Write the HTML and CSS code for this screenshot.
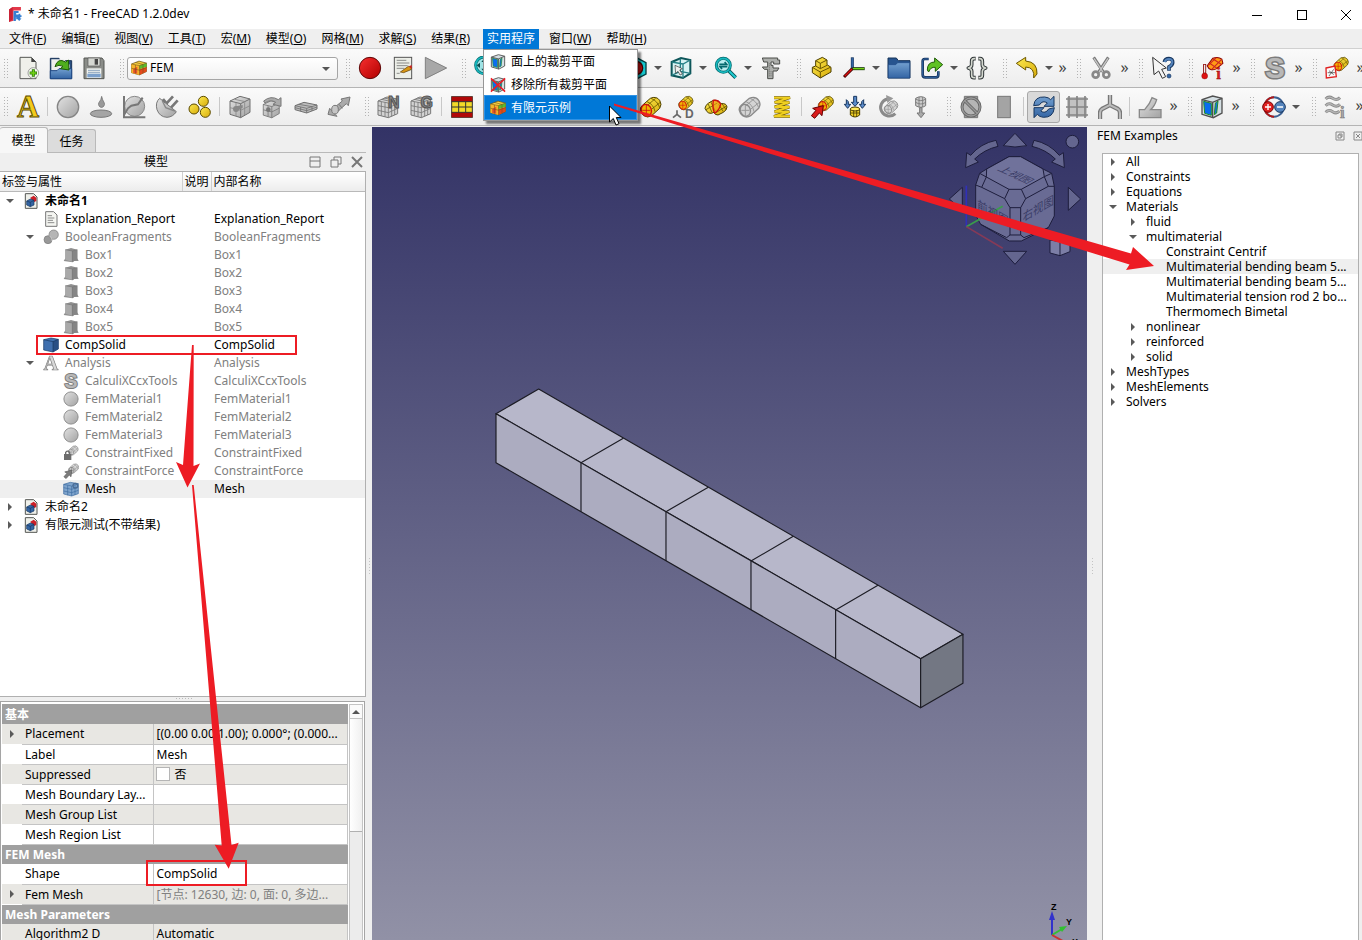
FILE: index.html
```html
<!DOCTYPE html>
<html lang="zh-CN">
<head>
<meta charset="utf-8">
<title>* 未命名1 - FreeCAD 1.2.0dev</title>
<link rel="stylesheet" href="styles.css">
</head>
<body>
<svg class="sprite" aria-hidden="true">
  <defs>
    <linearGradient id="gg" x1="0" y1="0" x2="1" y2="1"><stop offset="0" stop-color="#e2e2e2"/><stop offset="1" stop-color="#a2a2a2"/></linearGradient>
    <linearGradient id="gb" x1="0" y1="0" x2="0" y2="1"><stop offset="0" stop-color="#729fcf"/><stop offset="1" stop-color="#3465a4"/></linearGradient>
    <linearGradient id="gy" x1="0" y1="0" x2="1" y2="1"><stop offset="0" stop-color="#fce94f"/><stop offset="1" stop-color="#d8ac0a"/></linearGradient>
    <linearGradient id="gr" x1="0" y1="0" x2="1" y2="1"><stop offset="0" stop-color="#f83030"/><stop offset="1" stop-color="#b00000"/></linearGradient>
    <g id="cyl">
      <path d="M4 44 Q2 36 10 29 L34 8 Q52 0 62 14 Q70 26 62 38 L38 60 Q26 68 14 60 Q6 54 4 44Z" fill="url(#gy)" stroke="#4b3e00" stroke-width="3"/>
      <path d="M24 18Q44 26 48 48M36 8Q56 16 62 36M24 30L50 8M36 42L64 20" fill="none" stroke="#6a5800" stroke-width="2.5"/>
      <ellipse cx="22" cy="44" rx="15" ry="18" transform="rotate(-20 22 44)" fill="#f0b400" stroke="#d01010" stroke-width="4"/>
      <path d="M10 44H34M22 28V60" stroke="#d01010" stroke-width="2.5"/>
    </g>
    <g id="graycyl">
      <path d="M4 44 Q2 36 10 29 L34 8 Q52 0 62 14 Q70 26 62 38 L38 60 Q26 68 14 60 Q6 54 4 44Z" fill="#d4d4d4" stroke="#8a8a8a" stroke-width="4"/>
      <path d="M24 18Q44 26 48 48M36 8Q56 16 62 36M24 30L50 8M36 42L64 20M10 44H34M22 28V60" fill="none" stroke="#999" stroke-width="3"/>
      <ellipse cx="22" cy="44" rx="15" ry="18" transform="rotate(-20 22 44)" fill="none" stroke="#8a8a8a" stroke-width="4"/>
    </g>
    <g id="cube">
      <path d="M6 18L36 4L66 12V52L38 68L6 58Z" fill="url(#gg)" stroke="#707070" stroke-width="3"/>
      <path d="M6 18L38 26L66 12M38 26V68" fill="none" stroke="#707070" stroke-width="3"/>
    </g>
    <g id="grid3">
      <path d="M3 18L30 6L62 12V56L34 68L3 60Z" fill="#d2d2d2" stroke="#777" stroke-width="3"/>
      <path d="M3 18L34 24L62 12M34 24V68M13 20V62M24 22V65M3 32L34 38L62 26M3 46L34 53L62 40M44 20V64M53 16V60M14 13L44 20M22 9L53 16" fill="none" stroke="#777" stroke-width="2.5"/>
    </g>
    <g id="clipcube">
      <path d="M6 14L38 3L66 10V54L40 68L6 58Z" fill="#d5dfe3" stroke="#505050" stroke-width="4"/>
      <path d="M11 19L34 25V61L14 55Z" fill="#0a6cf0" stroke="#1d8d28" stroke-width="3"/>
      <path d="M46 24L54 18L50 54L43 59Z" fill="#1670e8" stroke="#1d8d28" stroke-width="3"/>
      <path d="M6 14L38 22L66 10M38 22V68" fill="none" stroke="#505050" stroke-width="4"/>
    </g>
  </defs>
  <symbol id="logo" viewBox="0 0 48 54"><path d="M4 12L16 3H44V15H19V50L4 54Z" fill="#e2384a"/><path d="M4 12L16 3V45L4 54Z" fill="#c82135"/><path d="M19 17H36V24H28V29H36V26H42V31H46V37H42V42H46L38 51L33 45H28V38H27V51H19Z" fill="#3580d3"/></symbol>
  <symbol id="new" viewBox="0 0 72 72"><path d="M12 4H46L60 18V68H12Z" fill="#eff0ea" stroke="#555753" stroke-width="3"/><path d="M46 4V18H60Z" fill="#444"/><circle cx="52" cy="51" r="16" fill="#f4f8ee" stroke="#777" stroke-width="2"/><path d="M52 40V62M41 51H63" stroke="#2d7c0b" stroke-width="9"/><path d="M52 42V60M43 51H61" stroke="#73d216" stroke-width="4"/></symbol>
  <symbol id="open" viewBox="0 0 72 72"><path d="M4 7H30L34 14H68V68H4Z" fill="#294f80" stroke="#1a3459" stroke-width="3"/><path d="M7 10H44L62 26V44H7Z" fill="#eee"/><path d="M4 44H24L30 38H68V68H4Z" fill="url(#gb)" stroke="#204a87" stroke-width="3"/><path d="M18 32Q26 4 50 18L58 12L60 42L34 38L42 31Q30 24 18 32Z" fill="#4fae1d" stroke="#1d5a05" stroke-width="3"/></symbol>
  <symbol id="save" viewBox="0 0 72 72"><path d="M8 6H60L66 14V68H6V6Z" fill="#8a8c88" stroke="#555753" stroke-width="3"/><path d="M18 6H54V30H18Z" fill="#d5d7d2" stroke="#555" stroke-width="2"/><rect x="38" y="9" width="10" height="17" fill="#444"/><rect x="14" y="37" width="44" height="29" fill="#f0f2ef"/><path d="M18 43H54M18 49H54" stroke="#5b7ba5" stroke-width="2"/><path d="M16 53H56V64H16Z" fill="#7ba0cc"/></symbol>
  <symbol id="fem" viewBox="0 0 72 72"><path d="M2 18L36 5L70 14V52L38 67L2 57Z" fill="#f8d040" stroke="#5a4512" stroke-width="3"/><path d="M2 18L38 25V67L2 57Z" fill="#f6b62a"/><path d="M38 25L70 14V30L38 42Z" fill="#58bd2e"/><path d="M38 42L70 32V52L38 67Z" fill="#e4481c"/><path d="M10 40L28 30V62L10 58Z" fill="#e8502a"/><path d="M20 11L54 20V59M2 37L38 46L70 34M20 22V62M38 25V67M2 18L38 25L70 14" fill="none" stroke="#74531a" stroke-width="2.5"/></symbol>
  <symbol id="record" viewBox="0 0 72 72"><circle cx="36" cy="36" r="32" fill="url(#gr)" stroke="#5c0707" stroke-width="3"/></symbol>
  <symbol id="macro" viewBox="0 0 72 72"><rect x="10" y="4" width="52" height="64" fill="#eceee8" stroke="#555" stroke-width="3"/><path d="M17 13H46M17 21H55M17 29H50M17 37H40M17 52H26" stroke="#777" stroke-width="2.5"/><path d="M28 48L52 31L62 34L60 41L38 50Z" fill="#d89614" stroke="#5a3b08" stroke-width="2"/><path d="M54 31L62 27V40Z" fill="#cc2020"/></symbol>
  <symbol id="play" viewBox="0 0 72 72"><path d="M4 4L68 36L4 68Z" fill="#a8a8a8" stroke="#808080" stroke-width="3"/></symbol>
  <symbol id="fit" viewBox="0 0 72 72"><circle cx="30" cy="28" r="25" fill="#9fe3e5" stroke="#06696e" stroke-width="9"/><circle cx="30" cy="28" r="25" fill="none" stroke="#17b8be" stroke-width="5"/><path d="M30 8L38 18H22ZM30 48L38 38H22ZM8 28L18 20V36ZM52 28L42 20V36Z" fill="#0a4c4e"/><path d="M48 46L66 64" stroke="#06898e" stroke-width="9"/></symbol>
  <symbol id="style" viewBox="0 0 72 72"><path d="M8 20L36 4L66 20V54L36 70L8 54Z" fill="#16c5cc" stroke="#033f42" stroke-width="4"/><circle cx="36" cy="36" r="20" fill="#cc1515" stroke="#400" stroke-width="4"/></symbol>
  <symbol id="wirebox" viewBox="0 0 72 72"><path d="M8 18L36 6L64 12V52L42 66L8 58Z" fill="#d7f2f3" stroke="#0d5559" stroke-width="6"/><path d="M8 18L42 24L64 12M42 24V66M34 8V46L8 58M34 46L64 52" fill="none" stroke="#258087" stroke-width="4"/><path d="M18 28L40 38L32 42L40 54L33 57L27 46L20 52Z" fill="#eee" stroke="#333" stroke-width="2"/></symbol>
  <symbol id="zoomsel" viewBox="0 0 72 72"><path d="M44 44L65 65" stroke="#05595c" stroke-width="11"/><path d="M44 44L65 65" stroke="#21cfd5" stroke-width="6"/><circle cx="28" cy="28" r="21" fill="#b9edef" stroke="#05696d" stroke-width="9"/><circle cx="28" cy="28" r="21" fill="none" stroke="#17b8be" stroke-width="5"/><path d="M16 25H38L32 18M40 32H18L24 39" fill="none" stroke="#05696d" stroke-width="5"/></symbol>
  <symbol id="caliper" viewBox="0 0 72 72"><path d="M10 6H56V12H62V24H44V18H36V28H42V36H60L54 45H42V68H26V40H16L10 33H26V18H14Z" fill="#aeb0ad" stroke="#4a4c49" stroke-width="3"/><path d="M31 22V64M36 46V64" stroke="#4a4c49" stroke-width="2" stroke-dasharray="3 3"/></symbol>
  <symbol id="part" viewBox="0 0 72 72"><path d="M10 34L20 30V14L40 4L54 12V26L66 34V48L34 66L10 50Z" fill="url(#gy)" stroke="#4b3e00" stroke-width="3"/><path d="M20 14L34 22L54 12M34 22V38L54 28M10 34L34 48L64 34M34 48V66M20 30L34 38" fill="none" stroke="#6b5600" stroke-width="3"/></symbol>
  <symbol id="axes" viewBox="0 0 72 72"><path d="M31 38V4" stroke="#17365f" stroke-width="9"/><path d="M31 38V6" stroke="#3465a4" stroke-width="5"/><path d="M31 38H68" stroke="#173b05" stroke-width="9"/><path d="M33 38H66" stroke="#73d216" stroke-width="4"/><path d="M31 38L6 63" stroke="#400" stroke-width="9"/><path d="M30 39L8 61" stroke="#d11" stroke-width="4"/></symbol>
  <symbol id="folder" viewBox="0 0 72 72"><path d="M3 6H28L34 14H69V66H3Z" fill="#27548f" stroke="#173459" stroke-width="3"/><path d="M4 26H26L32 20H68V66H4Z" fill="url(#gb)" stroke="#204a87" stroke-width="2"/></symbol>
  <symbol id="export" viewBox="0 0 72 72"><path d="M26 9H14Q8 9 8 16V56Q8 64 16 64H48Q55 64 55 56V46" fill="none" stroke="#17365f" stroke-width="8"/><path d="M26 9H14Q8 9 8 16V56Q8 64 16 64H48Q55 64 55 56V46" fill="none" stroke="#3465a4" stroke-width="3"/><path d="M22 42Q22 18 44 18V6L68 26L46 46V34Q32 32 26 48Z" fill="#5fc222" stroke="#1d5a05" stroke-width="3"/></symbol>
  <symbol id="braces" viewBox="0 0 72 72"><g fill="none" stroke-linejoin="round"><path d="M32 8H27Q20 8 20 16V26Q20 34 10 36Q20 38 20 46V58Q20 65 27 65H32M40 8H45Q52 8 52 16V26Q52 34 62 36Q52 38 52 46V58Q52 65 45 65H40" stroke="#2e3436" stroke-width="11"/><path d="M31 8H27Q20 8 20 16V26Q20 34 10 36Q20 38 20 46V58Q20 65 27 65H31M41 8H45Q52 8 52 16V26Q52 34 62 36Q52 38 52 46V58Q52 65 45 65H41" stroke="#d3d7cf" stroke-width="5"/></g></symbol>
  <symbol id="undo" viewBox="0 0 72 72"><path d="M4 22L32 4V15Q68 18 66 54L56 66Q60 34 32 33V42Z" fill="url(#gy)" stroke="#6b5600" stroke-width="3"/></symbol>
  <symbol id="cut" viewBox="0 0 72 72"><path d="M14 4L44 50M58 4L28 50" stroke="#777" stroke-width="9"/><path d="M15 7L43 50M57 7L29 50" stroke="#c6c6c6" stroke-width="4"/><circle cx="20" cy="56" r="9" fill="none" stroke="#888" stroke-width="8"/><circle cx="52" cy="56" r="9" fill="none" stroke="#888" stroke-width="8"/></symbol>
  <symbol id="what" viewBox="0 0 72 72"><path d="M40 18Q42 8 54 8Q66 8 65 20Q64 28 54 33V44" fill="none" stroke="#17365f" stroke-width="11"/><path d="M41 18Q43 9 54 9Q65 9 64 20Q63 28 54 33V43" fill="none" stroke="#5484bd" stroke-width="6"/><circle cx="54" cy="60" r="6" fill="#3465a4" stroke="#17365f" stroke-width="2"/><path d="M5 4L46 36L32 40L44 62L34 67L23 45L9 56Z" fill="#f4f4f4" stroke="#333" stroke-width="3"/></symbol>
  <symbol id="femcyl" viewBox="0 0 72 72"><use href="#cyl" transform="translate(3 2)"/></symbol>
  <symbol id="tie" viewBox="0 0 72 72"><use href="#graycyl" transform="translate(3 2)"/></symbol>
  <symbol id="heat" viewBox="0 0 72 72"><g transform="translate(14 -1) scale(.76)"><path d="M6 40L28 10Q50 2 64 14L68 30L42 52Q16 64 6 40Z" fill="#ff9b16" stroke="#8b0000" stroke-width="4"/><path d="M16 30L48 52M28 12L64 36M10 38L42 8M24 54L62 16" stroke="#c22" stroke-width="4"/></g><path d="M11 24V56" stroke="#8b0000" stroke-width="9"/><path d="M11 26V50" stroke="#eee" stroke-width="4"/><circle cx="11" cy="60" r="9" fill="#d11" stroke="#700"/><text x="46" y="70" font-family="Liberation Serif, serif" font-weight="700" font-size="50" fill="#d22" stroke="#700">i</text></symbol>
  <symbol id="solver" viewBox="0 0 72 72"><text x="36" y="67" text-anchor="middle" font-family="Liberation Sans, sans-serif" font-weight="700" font-size="88" fill="#b8b8b8" stroke="#7c7c7c" stroke-width="9" paint-order="stroke">S</text></symbol>
  <symbol id="region" viewBox="0 0 72 72"><g transform="translate(24 0) scale(.7)"><use href="#cyl"/></g><path d="M3 36L30 30L34 62L4 66Z" fill="#fff" fill-opacity=".7" stroke="#e02020" stroke-width="4"/><path d="M12 44L26 56M26 40L12 60M8 50H30" stroke="#333" stroke-width="2"/></symbol>
  <symbol id="ana" viewBox="0 0 72 72"><text x="36" y="67" text-anchor="middle" font-family="Liberation Serif, serif" font-weight="700" font-size="92" fill="#f2cb1c" stroke="#5a4a00" stroke-width="3">A</text></symbol>
  <symbol id="sphere" viewBox="0 0 72 72"><circle cx="36" cy="36" r="32" fill="url(#gg)" stroke="#858585" stroke-width="4"/></symbol>
  <symbol id="fluid" viewBox="0 0 72 72"><ellipse cx="36" cy="56" rx="32" ry="11" fill="#a5a5a5" stroke="#777" stroke-width="3"/><path d="M38 4Q40 14 46 24A9 10 0 1 1 29 24Q37 14 38 4Z" fill="#999" stroke="#666" stroke-width="2"/></symbol>
  <symbol id="nonlin" viewBox="0 0 72 72"><circle cx="38" cy="34" r="30" fill="url(#gg)" stroke="#888" stroke-width="3"/><path d="M6 3V67H70M6 60L18 40L28 32L48 28L62 8" fill="none" stroke="#777" stroke-width="6"/></symbol>
  <symbol id="reinf" viewBox="0 0 72 72"><path d="M14 10Q0 22 6 44Q14 66 36 67Q54 66 64 50L14 10Z" fill="url(#gg)" stroke="#777" stroke-width="3"/><path d="M34 26L54 4M48 38L68 16M24 12L32 22" stroke="#777" stroke-width="8"/><path d="M22 18L32 38L60 48" stroke="#888" stroke-width="4" fill="none"/></symbol>
  <symbol id="spheres" viewBox="0 0 72 72"><g fill="url(#gy)" stroke="#5a4a00" stroke-width="3"><circle cx="46" cy="19" r="15"/><circle cx="18" cy="42" r="15"/><circle cx="52" cy="52" r="15"/></g></symbol>
  <symbol id="beam" viewBox="0 0 72 72"><use href="#cube"/><path d="M20 13L52 20M50 22V60M6 38L38 46L66 32M24 23V63" stroke="#888" stroke-width="2.5" fill="none"/><circle cx="24" cy="42" r="9" fill="#888"/><path d="M24 34L44 30V38L26 48Z" fill="#888"/></symbol>
  <symbol id="rotbeam" viewBox="0 0 72 72"><g transform="translate(2 14) scale(.8)"><use href="#cube"/><path d="M6 38L38 46L66 32M24 23V63" stroke="#777" stroke-width="3" fill="none"/></g><path d="M8 18Q30 0 52 14L60 8V34L36 28L44 22Q28 12 12 24Z" fill="#aaa" stroke="#777" stroke-width="3"/><circle cx="22" cy="44" r="7" fill="#777"/></symbol>
  <symbol id="slab" viewBox="0 0 72 72"><path d="M3 32L30 22L69 30V42L38 54L3 44Z" fill="#bcbcbc" stroke="#707070" stroke-width="3"/><path d="M3 32L38 40L69 30M38 40V54M20 36V48M54 36V48M14 28L54 35M3 38L38 47L69 36" fill="none" stroke="#707070" stroke-width="2.5"/></symbol>
  <symbol id="tube" viewBox="0 0 72 72"><path d="M3 58L8 40L14 46L24 36L46 18L42 12L69 6L64 32L58 26L36 46L24 58L30 64Z" fill="#aaa" stroke="#777" stroke-width="3"/><ellipse cx="24" cy="44" rx="10" ry="13" fill="#c5c5c5" stroke="#777" stroke-width="3"/><path d="M36 28L46 40" stroke="#777" stroke-width="3"/></symbol>
  <symbol id="meshn" viewBox="0 0 72 72"><use href="#grid3"/><text x="50" y="38" text-anchor="middle" font-family="Liberation Sans, sans-serif" font-weight="700" font-size="48" fill="#888" stroke="#555" stroke-width="3">N</text></symbol>
  <symbol id="meshg" viewBox="0 0 72 72"><use href="#grid3"/><text x="50" y="38" text-anchor="middle" font-family="Liberation Sans, sans-serif" font-weight="700" font-size="48" fill="#888" stroke="#555" stroke-width="3">G</text></symbol>
  <symbol id="layers" viewBox="0 0 72 72"><rect x="5" y="5" width="62" height="62" fill="#f3d928" stroke="#333" stroke-width="3"/><path d="M5 5H67V20H5ZM5 52H67V67H5Z" fill="#b00808"/><path d="M5 20H67M5 36H67M5 52H67M26 20V52M47 20V52" stroke="#333" stroke-width="3"/></symbol>
  <symbol id="cyld" viewBox="0 0 72 72"><g transform="translate(20 0) scale(.7)"><use href="#cyl"/></g><path d="M18 46V58L6 68M18 58L30 68" fill="none" stroke="#666" stroke-width="5"/><text x="42" y="70" font-family="Liberation Sans, sans-serif" font-weight="700" font-size="36" fill="#666">D</text></symbol>
  <symbol id="contact" viewBox="0 0 72 72"><path d="M3 40Q4 30 14 24L28 16Q44 14 50 26Q68 24 69 36Q68 46 58 52L42 60Q32 60 30 52Q12 62 3 40Z" fill="url(#gy)" stroke="#4b3e00" stroke-width="3"/><path d="M12 26L24 52M20 20L34 48M6 44L40 24M34 54L66 34M44 28L58 50M54 26L66 44" stroke="#6a5800" stroke-width="2.5"/><path d="M28 16Q44 14 50 28Q46 46 32 54Q24 40 28 16Z" fill="#f09a10" fill-opacity=".6" stroke="#d01010" stroke-width="4"/></symbol>
  <symbol id="spring" viewBox="0 0 72 72"><path d="M12 8H60L14 22H58L14 36H58L14 50H58L12 64H60" fill="none" stroke="#6b5600" stroke-width="9"/><path d="M12 8H60L14 22H58L14 36H58L14 50H58L12 64H60" fill="none" stroke="#f0d020" stroke-width="6"/></symbol>
  <symbol id="force" viewBox="0 0 72 72"><g transform="translate(22 0) scale(.74)"><use href="#cyl"/></g><path d="M4 62L18 46L8 40L40 32L36 62L28 54L14 70Z" fill="#d91c1c" stroke="#600" stroke-width="3"/></symbol>
  <symbol id="press" viewBox="0 0 72 72"><path d="M22 42H50V60Q36 72 22 60Z" fill="#f0cf26" stroke="#4b3e00" stroke-width="3"/><ellipse cx="36" cy="42" rx="14" ry="6" fill="#ffe95b" stroke="#4b3e00" stroke-width="3"/><path d="M32 46V66M41 46V66M22 54H50" stroke="#4b3e00" stroke-width="2.5"/><path d="M32 4H41V22H47L36 34L25 22H32ZM10 14L16 20V28H23L14 40L4 28H10ZM62 14L56 20V28H49L58 40L68 28H62Z" fill="#5b8ccb" stroke="#17365f" stroke-width="3"/></symbol>
  <symbol id="centrif" viewBox="0 0 72 72"><path d="M34 12A26 26 0 1 0 58 56" fill="none" stroke="#8a8a8a" stroke-width="9"/><path d="M30 0L52 10L34 24Z" fill="#999"/><g transform="translate(22 14) scale(.66)"><use href="#graycyl"/></g></symbol>
  <symbol id="weight" viewBox="0 0 72 72"><path d="M20 10Q36 0 50 10V32Q36 42 20 32Z" fill="#ccc" stroke="#777" stroke-width="3"/><path d="M20 12Q36 22 50 12M20 22Q36 32 50 22M30 6V36M41 6V36" fill="none" stroke="#777" stroke-width="2.5"/><path d="M32 38H39V54H47L36 68L24 54H32Z" fill="#aaa" stroke="#777" stroke-width="3"/></symbol>
  <symbol id="block" viewBox="0 0 72 72"><path d="M16 4H56V68H16Z" fill="#999" stroke="#777" stroke-width="3"/><circle cx="36" cy="36" r="27" fill="#b5b5b5" stroke="#666" stroke-width="9"/><path d="M17 17L55 55" stroke="#666" stroke-width="9"/><circle cx="36" cy="36" r="27" fill="none" stroke="#999" stroke-width="4"/><path d="M17 17L55 55" stroke="#999" stroke-width="4"/></symbol>
  <symbol id="plate" viewBox="0 0 72 72"><rect x="17" y="4" width="38" height="64" fill="#a4a4a4" stroke="#777" stroke-width="3"/></symbol>
  <symbol id="refresh" viewBox="0 0 72 72"><path d="M5 32Q8 4 38 6Q50 7 56 14L66 4V34H36L46 24Q32 14 22 30ZM67 38Q64 68 34 67Q22 66 16 58L6 68V38H36L26 48Q40 58 50 42Z" fill="url(#gb)" stroke="#17365f" stroke-width="3"/></symbol>
  <symbol id="mesh2d" viewBox="0 0 72 72"><rect x="6" y="6" width="60" height="60" fill="#c2c2c2"/><path d="M3 12H69M3 36H69M3 60H69M12 3V69M36 3V69M60 3V69" stroke="#858585" stroke-width="5"/></symbol>
  <symbol id="pipe" viewBox="0 0 72 72"><path d="M36 0V30L12 42Q6 46 6 54V72M36 30L60 42Q66 46 66 54V72" fill="none" stroke="#777" stroke-width="13"/><path d="M36 0V30L12 42Q6 46 6 54V72M36 30L60 42Q66 46 66 54V72" fill="none" stroke="#bbb" stroke-width="6"/></symbol>
  <symbol id="elbow" viewBox="0 0 72 72"><path d="M4 44H20Q36 26 42 8L56 14Q50 34 38 44H69V68H4Z" fill="url(#gg)" stroke="#888" stroke-width="4"/></symbol>
  <symbol id="clip" viewBox="0 0 72 72"><use href="#clipcube"/></symbol>
  <symbol id="clipx" viewBox="0 0 72 72"><use href="#clipcube"/><path d="M4 6L68 66M68 6L4 66" stroke="#ee1c25" stroke-width="7"/></symbol>
  <symbol id="charge" viewBox="0 0 72 72"><circle cx="36" cy="36" r="29" fill="none" stroke="#3a5f92" stroke-width="6"/><path d="M36 7A29 29 0 0 0 36 65" fill="none" stroke="#b01818" stroke-width="6"/><circle cx="18" cy="36" r="16" fill="#e02020" stroke="#700" stroke-width="3"/><circle cx="54" cy="36" r="16" fill="#5484bd" stroke="#17365f" stroke-width="3"/><path d="M9 36H27M18 27V45M45 36H63" stroke="#fff" stroke-width="4"/></symbol>
  <symbol id="waves" viewBox="0 0 72 72"><path d="M5 12Q14 2 26 10T48 8M5 32Q14 22 26 30T48 28M5 52Q14 42 26 50T46 48" fill="none" stroke="#888" stroke-width="9"/><path d="M5 12Q14 2 26 10T48 8M5 32Q14 22 26 30T48 28M5 52Q14 42 26 50T46 48" fill="none" stroke="#b5b5b5" stroke-width="4"/><text x="48" y="70" font-family="Liberation Serif, serif" font-weight="700" font-size="50" fill="#aaa" stroke="#777" stroke-width="2">i</text></symbol>
  <symbol id="file" viewBox="0 0 48 48"><path d="M7 2H32L42 12V46H7Z" fill="#eff0ea" stroke="#555753" stroke-width="3"/><path d="M22 14L32 8L40 14V24L32 28Z" fill="#cc1f28"/><path d="M11 24L22 18L33 22V36L22 41L11 36Z" fill="#3465a4" stroke="#17365f" stroke-width="2"/><path d="M11 24L22 28L33 22M22 28V41" fill="none" stroke="#17365f" stroke-width="2"/></symbol>
  <symbol id="doc" viewBox="0 0 48 48"><path d="M8 2H32L42 12V46H8Z" fill="#f4f5f1" stroke="#777" stroke-width="3"/><path d="M14 14H27M14 21H34M14 28H30M14 35H34" stroke="#777" stroke-width="2.5"/></symbol>
  <symbol id="bool" viewBox="0 0 48 48"><circle cx="15" cy="32" r="12" fill="#999" stroke="#777" stroke-width="2"/><circle cx="32" cy="17" r="14" fill="#b5b5b5" stroke="#777" stroke-width="2"/><path d="M19 21A14 14 0 0 1 27 36" stroke="#ddd" stroke-width="2" fill="none"/></symbol>
  <symbol id="box" viewBox="0 0 48 48"><path d="M7 8L24 3L43 8V34L47 42H34L29 46L2 42L7 34Z" fill="#8f8f8f"/><path d="M7 8L28 12V44L7 38Z" fill="#a9a9a9"/><path d="M28 12L43 8V38L28 44Z" fill="#858585"/><path d="M7 8L28 12L43 8M28 12V44" stroke="#757575" fill="none" stroke-width="2"/></symbol>
  <symbol id="solid" viewBox="0 0 48 48"><path d="M2 8L24 3L46 7V36L30 45L2 39Z" fill="#3f6fae" stroke="#17365f" stroke-width="2"/><path d="M30 14L46 7V36L30 45Z" fill="#284f85"/><path d="M2 8L30 14L46 7M30 14V45" fill="none" stroke="#17365f" stroke-width="2"/></symbol>
  <symbol id="lock" viewBox="0 0 48 48"><g transform="translate(14 0) scale(.48)"><use href="#graycyl"/></g><rect x="3" y="27" width="22" height="18" fill="#6d6d6d"/><path d="M8 28V22Q14 15 20 22V28" fill="none" stroke="#6d6d6d" stroke-width="4"/></symbol>
  <symbol id="bluemesh" viewBox="0 0 48 48"><path d="M2 10L22 4L46 8V38L26 45L2 39Z" fill="#7fa4cc" stroke="#3e6ca2" stroke-width="2"/><path d="M2 10L26 15L46 8M26 15V45M14 13V43M2 20L26 25L46 18M2 30L26 35L46 28M36 12V42" fill="none" stroke="#3e6ca2" stroke-width="2"/><circle cx="37" cy="14" r="7" fill="none" stroke="#4b6d96" stroke-width="4"/></symbol>
</svg>

<div class="app">
  <header class="titlebar">
    <svg class="titlebar__logo"><use href="#logo"/></svg>
    <h1 class="titlebar__text">* 未命名1 - FreeCAD 1.2.0dev</h1>
    <button class="winbtn" aria-label="最小化"><svg viewBox="0 0 12 12"><path d="M1 6.500H11"/></svg></button>
    <button class="winbtn" aria-label="最大化"><svg viewBox="0 0 12 12"><rect x="1.500" y="1.500" width="9" height="9"/></svg></button>
    <button class="winbtn" aria-label="关闭"><svg viewBox="0 0 12 12"><path d="M1 1L11 11M11 1L1 11"/></svg></button>
  </header>

  <nav class="menubar">
    <button class="menubar__item">文件(<u>F</u>)</button>
    <button class="menubar__item">编辑(<u>E</u>)</button>
    <button class="menubar__item">视图(<u>V</u>)</button>
    <button class="menubar__item">工具(<u>T</u>)</button>
    <button class="menubar__item">宏(<u>M</u>)</button>
    <button class="menubar__item">模型(<u>O</u>)</button>
    <button class="menubar__item">网格(<u>M</u>)</button>
    <button class="menubar__item">求解(<u>S</u>)</button>
    <button class="menubar__item">结果(<u>R</u>)</button>
    <div class="menubar__open">
      <button class="menubar__item menubar__item--active" aria-expanded="true">实用程序</button>
      <div class="menu" role="menu">
        <button class="menu__item" role="menuitem"><svg><use href="#clip"/></svg>面上的裁剪平面</button>
        <button class="menu__item" role="menuitem"><svg><use href="#clipx"/></svg>移除所有裁剪平面</button>
        <button class="menu__item menu__item--active" role="menuitem"><svg><use href="#fem"/></svg>有限元示例</button>
      </div>
    </div>
    <button class="menubar__item">窗口(<u>W</u>)</button>
    <button class="menubar__item">帮助(<u>H</u>)</button>
  </nav>

  <div class="toolbar toolbar--top" role="toolbar" aria-label="标准">
    <span class="grip grip--first"></span>
    <button class="tool" aria-label="新建"><svg><use href="#new"/></svg></button>
    <button class="tool" aria-label="打开"><svg><use href="#open"/></svg></button>
    <button class="tool" aria-label="保存"><svg><use href="#save"/></svg></button>
    <span class="grip"></span>
    <label class="workbench" aria-label="工作台"><svg class="workbench__icon"><use href="#fem"/></svg><select class="workbench__select"><option>FEM</option></select></label>
    <span class="grip"></span>
    <button class="tool" aria-label="录制宏"><svg><use href="#record"/></svg></button>
    <button class="tool" aria-label="宏"><svg><use href="#macro"/></svg></button>
    <button class="tool" aria-label="执行宏"><svg><use href="#play"/></svg></button>
    <span class="grip"></span>
    <button class="tool" aria-label="适合全部"><svg><use href="#fit"/></svg></button>
    <span class="covered"></span>
    <button class="tool" aria-label="绘图样式"><svg><use href="#style"/></svg></button><button class="drop" aria-label="更多样式"></button>
    <button class="tool" aria-label="框选"><svg><use href="#wirebox"/></svg></button><button class="drop" aria-label="更多选择"></button>
    <button class="tool" aria-label="缩放"><svg><use href="#zoomsel"/></svg></button><button class="drop" aria-label="更多缩放"></button>
    <button class="tool" aria-label="测量"><svg><use href="#caliper"/></svg></button>
    <span class="grip"></span>
    <button class="tool" aria-label="零件"><svg><use href="#part"/></svg></button>
    <button class="tool" aria-label="坐标系"><svg><use href="#axes"/></svg></button><button class="drop" aria-label="更多坐标"></button>
    <button class="tool" aria-label="组"><svg><use href="#folder"/></svg></button>
    <button class="tool" aria-label="链接"><svg><use href="#export"/></svg></button><button class="drop" aria-label="更多链接"></button>
    <button class="tool" aria-label="表达式"><svg><use href="#braces"/></svg></button>
    <span class="grip"></span>
    <button class="tool" aria-label="撤销"><svg><use href="#undo"/></svg></button><button class="drop" aria-label="撤销列表"></button>
    <button class="more">»</button>
    <span class="grip"></span>
    <button class="tool" aria-label="剪切"><svg><use href="#cut"/></svg></button><button class="more">»</button>
    <span class="grip"></span>
    <button class="tool" aria-label="这是什么"><svg><use href="#what"/></svg></button>
    <span class="grip"></span>
    <button class="tool" aria-label="热"><svg><use href="#heat"/></svg></button><button class="more">»</button>
    <span class="grip"></span>
    <button class="tool" aria-label="求解器"><svg><use href="#solver"/></svg></button><button class="more">»</button>
    <span class="grip"></span>
    <button class="tool" aria-label="区域"><svg><use href="#region"/></svg></button><button class="more">»</button>
  </div>

  <div class="toolbar" role="toolbar" aria-label="有限元">
    <span class="grip grip--first"></span>
    <button class="tool" aria-label="分析"><svg><use href="#ana"/></svg></button>
    <span class="sep"></span>
    <button class="tool" aria-label="固体材料"><svg><use href="#sphere"/></svg></button>
    <button class="tool" aria-label="流体材料"><svg><use href="#fluid"/></svg></button>
    <button class="tool" aria-label="非线性材料"><svg><use href="#nonlin"/></svg></button>
    <button class="tool" aria-label="钢筋材料"><svg><use href="#reinf"/></svg></button>
    <button class="tool" aria-label="材料编辑"><svg><use href="#spheres"/></svg></button>
    <span class="sep"></span>
    <button class="tool" aria-label="梁截面"><svg><use href="#beam"/></svg></button>
    <button class="tool" aria-label="梁旋转"><svg><use href="#rotbeam"/></svg></button>
    <button class="tool" aria-label="壳厚度"><svg><use href="#slab"/></svg></button>
    <button class="tool" aria-label="流体截面"><svg><use href="#tube"/></svg></button>
    <span class="grip"></span>
    <button class="tool" aria-label="Netgen 网格"><svg><use href="#meshn"/></svg></button>
    <button class="tool" aria-label="Gmsh 网格"><svg><use href="#meshg"/></svg></button>
    <span class="sep"></span>
    <button class="tool" aria-label="网格层"><svg><use href="#layers"/></svg></button>
    <span class="covered covered--long"></span>
    <button class="tool" aria-label="位移约束"><svg><use href="#femcyl"/></svg></button>
    <button class="tool" aria-label="刚体约束"><svg><use href="#cyld"/></svg></button>
    <button class="tool" aria-label="接触约束"><svg><use href="#contact"/></svg></button>
    <button class="tool" aria-label="绑定约束"><svg><use href="#tie"/></svg></button>
    <button class="tool" aria-label="弹簧"><svg><use href="#spring"/></svg></button>
    <span class="sep"></span>
    <button class="tool" aria-label="力"><svg><use href="#force"/></svg></button>
    <button class="tool" aria-label="压力"><svg><use href="#press"/></svg></button>
    <button class="tool" aria-label="离心力"><svg><use href="#centrif"/></svg></button>
    <button class="tool" aria-label="重力"><svg><use href="#weight"/></svg></button>
    <span class="grip"></span>
    <button class="tool" aria-label="清除结果"><svg><use href="#block"/></svg></button>
    <button class="tool" aria-label="显示结果"><svg><use href="#plate"/></svg></button>
    <span class="sep"></span>
    <button class="tool tool--checked" aria-label="刷新"><svg><use href="#refresh"/></svg></button>
    <button class="tool" aria-label="管线"><svg><use href="#mesh2d"/></svg></button>
    <button class="tool" aria-label="分支"><svg><use href="#pipe"/></svg></button>
    <span class="sep"></span>
    <button class="tool" aria-label="变形"><svg><use href="#elbow"/></svg></button><button class="more">»</button>
    <span class="grip"></span>
    <button class="tool" aria-label="裁剪平面"><svg><use href="#clip"/></svg></button><button class="more">»</button>
    <span class="grip"></span>
    <button class="tool" aria-label="电磁"><svg><use href="#charge"/></svg></button><button class="drop" aria-label="更多电磁"></button>
    <span class="grip"></span>
    <button class="tool" aria-label="流体"><svg><use href="#waves"/></svg></button><button class="more">»</button>
  </div>

  <main class="work">
    <section class="side">
      <div class="tabs"><button class="tab tab--active">模型</button><button class="tab">任务</button></div>
      <div class="dockhead">
        <h2 class="dockhead__title">模型</h2>
        <button class="dockbtn" aria-label="折叠"><svg viewBox="0 0 12 12"><path d="M1 1H11V11H1ZM1 5H11"/></svg></button>
        <button class="dockbtn" aria-label="浮动"><svg viewBox="0 0 12 12"><path d="M1 4H8V11H1ZM4 4V1H11V8H8"/></svg></button>
        <button class="dockbtn" aria-label="关闭"><svg viewBox="0 0 12 12"><path class="thick" d="M1 1L11 11M11 1L1 11"/></svg></button>
      </div>
      <div class="treebox">
        <table class="tree">
          <colgroup><col class="c1"><col class="c2"><col></colgroup>
          <thead><tr><th>标签与属性</th><th>说明</th><th>内部名称</th></tr></thead>
          <tbody>
            <tr class="strong"><td colspan="2"><div class="node"><i class="exp open"></i><svg><use href="#file"/></svg>未命名1</div></td><td></td></tr>
            <tr><td colspan="2"><div class="node d1"><i class="exp"></i><svg><use href="#doc"/></svg>Explanation_Report</div></td><td>Explanation_Report</td></tr>
            <tr class="dim"><td colspan="2"><div class="node d1"><i class="exp open"></i><svg><use href="#bool"/></svg>BooleanFragments</div></td><td>BooleanFragments</td></tr>
            <tr class="dim"><td colspan="2"><div class="node d2"><i class="exp"></i><svg><use href="#box"/></svg>Box1</div></td><td>Box1</td></tr>
            <tr class="dim"><td colspan="2"><div class="node d2"><i class="exp"></i><svg><use href="#box"/></svg>Box2</div></td><td>Box2</td></tr>
            <tr class="dim"><td colspan="2"><div class="node d2"><i class="exp"></i><svg><use href="#box"/></svg>Box3</div></td><td>Box3</td></tr>
            <tr class="dim"><td colspan="2"><div class="node d2"><i class="exp"></i><svg><use href="#box"/></svg>Box4</div></td><td>Box4</td></tr>
            <tr class="dim"><td colspan="2"><div class="node d2"><i class="exp"></i><svg><use href="#box"/></svg>Box5</div></td><td>Box5</td></tr>
            <tr><td colspan="2"><div class="node d1"><i class="exp"></i><svg><use href="#solid"/></svg>CompSolid</div></td><td>CompSolid</td></tr>
            <tr class="dim"><td colspan="2"><div class="node d1"><i class="exp open"></i><svg class="off"><use href="#ana"/></svg>Analysis</div></td><td>Analysis</td></tr>
            <tr class="dim"><td colspan="2"><div class="node d2"><i class="exp"></i><svg><use href="#solver"/></svg>CalculiXCcxTools</div></td><td>CalculiXCcxTools</td></tr>
            <tr class="dim"><td colspan="2"><div class="node d2"><i class="exp"></i><svg><use href="#sphere"/></svg>FemMaterial1</div></td><td>FemMaterial1</td></tr>
            <tr class="dim"><td colspan="2"><div class="node d2"><i class="exp"></i><svg><use href="#sphere"/></svg>FemMaterial2</div></td><td>FemMaterial2</td></tr>
            <tr class="dim"><td colspan="2"><div class="node d2"><i class="exp"></i><svg><use href="#sphere"/></svg>FemMaterial3</div></td><td>FemMaterial3</td></tr>
            <tr class="dim"><td colspan="2"><div class="node d2"><i class="exp"></i><svg><use href="#lock"/></svg>ConstraintFixed</div></td><td>ConstraintFixed</td></tr>
            <tr class="dim"><td colspan="2"><div class="node d2"><i class="exp"></i><svg class="off"><use href="#force"/></svg>ConstraintForce</div></td><td>ConstraintForce</td></tr>
            <tr class="sel"><td colspan="2"><div class="node d2"><i class="exp"></i><svg><use href="#bluemesh"/></svg>Mesh</div></td><td>Mesh</td></tr>
            <tr><td colspan="2"><div class="node"><i class="exp shut"></i><svg><use href="#file"/></svg>未命名2</div></td><td></td></tr>
            <tr><td colspan="2"><div class="node"><i class="exp shut"></i><svg><use href="#file"/></svg>有限元测试(不带结果)</div></td><td></td></tr>
          </tbody>
        </table>
      </div>
      <div class="splitdots"></div>
      <div class="propbox">
        <table class="props">
          <colgroup><col class="p0"><col class="p1"><col></colgroup>
          <tbody>
            <tr class="group"><th colspan="3">基本</th></tr>
            <tr class="alt"><td class="x"><i class="exp shut"></i></td><td>Placement</td><td>[(0.00 0.00 1.00); 0.000°; (0.000...</td></tr>
            <tr><td class="x"></td><td>Label</td><td>Mesh</td></tr>
            <tr class="alt"><td class="x"></td><td>Suppressed</td><td><label class="check"><input type="checkbox">否</label></td></tr>
            <tr><td class="x"></td><td>Mesh Boundary Lay...</td><td></td></tr>
            <tr class="alt"><td class="x"></td><td>Mesh Group List</td><td></td></tr>
            <tr><td class="x"></td><td>Mesh Region List</td><td></td></tr>
            <tr class="group"><th colspan="3">FEM Mesh</th></tr>
            <tr><td class="x"></td><td>Shape</td><td>CompSolid</td></tr>
            <tr class="alt"><td class="x"><i class="exp shut"></i></td><td>Fem Mesh</td><td class="muted">[节点: 12630, 边: 0, 面: 0, 多边...</td></tr>
            <tr class="group"><th colspan="3">Mesh Parameters</th></tr>
            <tr class="alt"><td class="x"></td><td>Algorithm2 D</td><td>Automatic</td></tr>
          </tbody>
        </table>
        <div class="scroll"><button class="scroll__up" aria-label="向上滚动"></button><div class="scroll__thumb"></div></div>
      </div>
    </section>

    <div class="gutter"></div>

    <section class="view" aria-label="三维视图">
      <svg viewBox="372 127 715 813" preserveAspectRatio="xMidYMid slice">
        <g transform="translate(480 380) scale(.3333)" stroke="#1c1c24" stroke-width="3.500" stroke-linejoin="round">
          <path d="M48 101L176 27L1449 763L1322 836Z" fill="#b7b7ca"/>
          <path d="M48 101L1322 836V983L48 248Z" fill="#acacc0"/>
          <path d="M1322 836L1449 763V910L1322 983Z" fill="#737783"/>
          <path d="M303 395V248L430 175M558 543V395L685 322M813 690V543L940 469M1067 837V690L1194 616" fill="none"/>
        </g>
        <g transform="translate(940 125) scale(.3333)" stroke="#1d1d3c" stroke-width="3" stroke-linejoin="round" fill="#64668f">
          <path d="M225 25L260 62Q225 70 190 62ZM28 222L67 187V256ZM422 222L385 187V256ZM190 379H260L225 418ZM77 128L80 83L92 91Q122 55 168 46L174 64Q132 74 104 102L115 111ZM373 128L370 83L358 91Q328 55 282 46L276 64Q318 74 346 102L335 111Z"/>
          <circle cx="397" cy="50" r="19"/>
          <path d="M330 345L358 350L390 338V380L360 392L330 384Z" fill="#7c7ea6"/><path d="M360 352V392"/>
          <path d="M207 95H242L309 132L335 145L343 184V273L325 308L244 348H208L122 298L107 270V180L119 145L140 132Z" fill="#696b94"/>
          <path d="M140 132L207 95H242L309 132L313 155L244 193H207L139 156Z" fill="#70729b"/>
          <path d="M139 156L119 145M313 155L335 145M139 156L125 187L107 180M313 155L325 184L343 184M125 187L194 221L207 193M244 193L257 221L325 184M194 221L210 248H242L257 221M210 248V330H242V248M122 298L200 338L210 330M242 330L252 338L325 308" fill="none"/>
          <path d="M79 305V182" stroke="#3030b8" stroke-width="5"/><path d="M79 305L188 244" stroke="#3a9d4b" stroke-width="5"/><path d="M79 305L188 370" stroke="#863a57" stroke-width="5"/>
          <g stroke="none" fill="#3a3c66" font-family="Noto Sans CJK SC, sans-serif" font-size="36"><text transform="matrix(.87 .4 -.8 .45 170 134)">上视图</text><text transform="matrix(.87 .5 0 1 112 250)">前视图</text><text transform="matrix(.87 -.5 0 1 248 290)">右视图</text></g>
        </g>
        <g fill="none" stroke-width="1"><path d="M1052 935V914" stroke="#3232cc" stroke-width="2"/><path d="M1049 920L1052 911L1055 920Z" fill="#3232cc" stroke="none"/><path d="M1052 935L1062 929" stroke="#32c032" stroke-width="2"/><path d="M1059 927L1067 926L1062 932Z" fill="#32c032" stroke="none"/><path d="M1052 935L1070 945" stroke="#cc3232" stroke-width="2"/></g>
        <g class="axis"><text x="1051" y="910">Z</text><text x="1066" y="925">Y</text><text x="1072" y="945">X</text></g>
      </svg>
    </section>

    <div class="gutter"></div>

    <section class="examples">
      <div class="examples__head"><h2>FEM Examples</h2>
        <button class="minibtn" aria-label="浮动"><svg viewBox="0 0 10 10"><path d="M1 1H9V9H1ZM3 4H6V7H3ZM4 4V3H7V6H6"/></svg></button>
        <button class="minibtn" aria-label="关闭"><svg viewBox="0 0 10 10"><path d="M1 1H9V9H1ZM3 3L7 7M7 3L3 7"/></svg></button>
      </div>
      <ul class="list">
        <li><i class="exp shut"></i>All</li>
        <li><i class="exp shut"></i>Constraints</li>
        <li><i class="exp shut"></i>Equations</li>
        <li><i class="exp open"></i>Materials</li>
        <li class="d1"><i class="exp shut"></i>fluid</li>
        <li class="d1"><i class="exp open"></i>multimaterial</li>
        <li class="d2"><i class="exp"></i>Constraint Centrif</li>
        <li class="d2 sel"><i class="exp"></i>Multimaterial bending beam 5...</li>
        <li class="d2"><i class="exp"></i>Multimaterial bending beam 5...</li>
        <li class="d2"><i class="exp"></i>Multimaterial tension rod 2 bo...</li>
        <li class="d2"><i class="exp"></i>Thermomech Bimetal</li>
        <li class="d1"><i class="exp shut"></i>nonlinear</li>
        <li class="d1"><i class="exp shut"></i>reinforced</li>
        <li class="d1"><i class="exp shut"></i>solid</li>
        <li><i class="exp shut"></i>MeshTypes</li>
        <li><i class="exp shut"></i>MeshElements</li>
        <li><i class="exp shut"></i>Solvers</li>
      </ul>
    </section>
  </main>

  <svg class="marks" viewBox="0 0 1362 940" preserveAspectRatio="xMinYMin meet" aria-hidden="true">
    <g fill="none" stroke="#ed1c24" stroke-width="2"><rect x="37" y="336" width="259" height="18"/><rect x="147" y="861" width="99" height="24"/></g>
    <g fill="#ed1c24">
      <path d="M614 103.500L1131 253.500L1133 247L1154 266L1126 270L1129.500 264.500L614 105.500Z"/>
      <path d="M192 345H193.700L193.500 466L200 463.500L187.500 487.500L176 462L183 465Z"/>
      <path d="M192 485H193.700L231.500 845L238.700 842.700L228.700 868.700L214.700 844.700L221.700 845.500Z"/>
    </g>
    <path d="M609.500 106V122L613.300 118.500L616 125L619 123.700L616.300 117.500H621Z" fill="#fff" stroke="#000"/>
  </svg>
</div>
</body>
</html>
```
FILE: styles.css
```css
* { box-sizing: border-box; }
html, body { height: 100%; }
body {
  margin: 0;
  overflow: hidden;
  background: #efefef;
  color: #000;
  font: 12px/18px "Noto Sans", "Noto Sans CJK SC", sans-serif;
}
button {
  margin: 0;
  padding: 0;
  border: 0;
  background: none;
  color: inherit;
  font: inherit;
}
h1, h2 { margin: 0; font-size: 12px; font-weight: 400; }
.sprite { position: absolute; width: 0; height: 0; visibility: hidden; }

.app { position: relative; display: flex; flex-direction: column; height: 100vh; overflow: hidden; }

.titlebar { display: flex; align-items: center; height: 29px; flex: none; padding-left: 7px; background: #fff; }
.titlebar__logo { width: 16px; height: 18px; margin-right: 5px; padding-bottom: 2px; }
.titlebar__text { flex: 1; padding-bottom: 2px; }
.winbtn { display: grid; place-items: center; width: 45px; height: 27px; }
.winbtn:last-child { width: 44px; margin-right: -6px; }
.winbtn svg { width: 12px; height: 12px; fill: none; stroke: #000; stroke-width: 1; }

.menubar { display: flex; gap: 1px; flex: none; height: 19px; padding-left: 2px; background: #efefef; }
.menubar__item { height: 20px; padding: 0 7px 1px; white-space: nowrap; }
.menubar__open { position: relative; margin: 0 2px 0 5px; }
.menubar__item--active { padding: 0 4px 1px; background: #0078d7; color: #fff; }
.menu {
  position: absolute;
  z-index: 5;
  top: 20px;
  left: 0;
  width: 155px;
  padding: 0 1px 1px;
  border: 1px solid #979797;
  background: #fff;
  box-shadow: 3px 3px 2px rgba(0, 0, 0, .5);
}
.menu__item { display: flex; align-items: center; gap: 5px; width: 100%; height: 23px; padding-left: 5px; white-space: nowrap; }
.menu__item svg { width: 16px; height: 16px; }
.menu__item--active { background: #0078d7; color: #fff; outline: 1px solid #2f93e6; }

.toolbar {
  display: flex;
  align-items: center;
  flex: none;
  height: 38px;
  overflow: hidden;
  border-bottom: 1px solid #b4b4b4;
  background: linear-gradient(#fafafa, #ededed);
}
.toolbar--top { height: 40px; border-top: 1px solid #d0d0d0; }
.toolbar > * { flex: none; }
.tool { display: grid; place-items: center; width: 33px; height: 32px; }
.tool svg { width: 24px; height: 24px; }
.off { filter: grayscale(1) opacity(.7); }
.tool--checked { border: 1px solid #a8a8a8; border-radius: 3px; background: #d9d9d9; }
.grip { width: 17px; height: 21px; background: radial-gradient(circle, #b4b4b4 35%, transparent 40%) 9px 0 / 3px 3px repeat-y, radial-gradient(circle, #b4b4b4 35%, transparent 40%) 12px 0 / 3px 3px repeat-y; }
.grip--first { width: 11px; background-position: 3px 0, 6px 0; }
.sep { width: 4px; height: 19px; margin-left: 3px; border-left: 1px solid #c8c8c8; }
.drop { width: 12px; height: 24px; }
.drop::before { content: ""; display: block; margin: auto; width: 0; border: 4px solid transparent; border-top-color: #555; border-bottom: 0; }
.more { width: 12px; padding: 0 0 3px 3px; color: #444; font-size: 16px; }
.covered { width: 117px; }
.covered--long { width: 155px; }

.workbench { position: relative; width: 211px; height: 23px; margin-right: -2px; }
.workbench__icon { position: absolute; left: 4px; top: 3px; width: 16px; height: 16px; pointer-events: none; }
.workbench__select {
  width: 100%;
  height: 100%;
  padding: 0 22px;
  appearance: none;
  border: 1px solid #a5a5a5;
  border-radius: 3px;
  background: linear-gradient(#fff, #f1f1f1);
  font: inherit;
}
.workbench::after { content: ""; position: absolute; right: 8px; top: 10px; border: 4px solid transparent; border-top-color: #555; border-bottom: 0; }

.work { display: grid; grid-template-columns: 366px 6px minmax(0, 1fr) 10px 265px; flex: 1; min-height: 0; }
.side { display: flex; flex-direction: column; min-height: 0; }
.tabs { display: flex; align-items: flex-end; height: 26px; flex: none; border-bottom: 1px solid #b9b9b9; }
.tab { width: 48px; height: 23px; padding-top: 1px; border: 1px solid #b9b9b9; border-width: 1px 1px 0 0; border-radius: 3px 3px 0 0; background: #dcdcdc; }
.tab--active { height: 26px; margin-bottom: -1px; background: #f7f7f7; }
.dockhead { display: flex; align-items: center; height: 18px; flex: none; padding-right: 3px; }
.dockhead__title { flex: 1; padding-left: 8px; text-align: center; }
.dockbtn { display: grid; place-items: center; width: 21px; height: 18px; }
.dockbtn:last-child { margin-right: -4px; }
.dockbtn svg { width: 12px; height: 12px; fill: none; stroke: #777; }
.dockbtn .thick { stroke-width: 2; }

.treebox { flex: 1; min-height: 0; overflow: hidden; border: solid #b0b0b0; border-width: 1px 1px 1px 0; background: #fff; }
.tree { width: 100%; table-layout: fixed; border-collapse: collapse; }
.c1 { width: 182px; }
.c2 { width: 29px; }
.tree th { height: 19px; padding: 1px 0 0 2px; border-right: 1px solid #cfcfcf; border-bottom: 1px solid #b9b9b9; background: linear-gradient(#fff, #ececec); font-weight: 400; line-height: 17px; text-align: left; white-space: nowrap; }
.tree th:last-child { border-right: 0; }
.tree td { height: 18px; padding: 0; line-height: 18px; white-space: nowrap; }
.tree td:last-child { padding-left: 3px; }
.node { display: flex; align-items: center; }
.node svg { width: 16px; height: 16px; margin: 0 6px 0 3px; }
.d1 { padding-left: 20px; }
.d2 { padding-left: 40px; }
.dim { color: #808080; }
.strong { font-weight: 700; }
.sel { background: #efefef; }
.exp { display: grid; place-items: center; flex: none; width: 20px; }
.open::before { content: ""; border: 4px solid transparent; border-top-color: #5a5a5a; border-bottom: 0; }
.shut::before { content: ""; border: 4px solid transparent; border-left-color: #5a5a5a; border-right: 0; }

.splitdots { flex: none; height: 4px; background: repeating-linear-gradient(90deg, #bbb 0 1px, transparent 1px 3px) 176px 1px / 16px 1px no-repeat; }
.propbox { display: flex; flex: none; height: 239px; overflow: hidden; border: solid #a5a5a5; border-width: 1px 1px 0; padding: 2px 1px 0; margin-right: 1px; background: #fff; }
.props { flex: 1; table-layout: fixed; border-collapse: collapse; align-self: flex-start; }
.p0 { width: 20px; }
.p1 { width: 131px; }
.props td, .props th { height: 20px; padding: 0 0 0 3px; line-height: 19px; text-align: left; white-space: nowrap; overflow: hidden; }
.props td { border-bottom: 1px solid #c4c4c4; border-right: 1px solid #c4c4c4; }
.props .x { padding: 0; border: 0; }
.props .alt { background: #e8e7e3; }
.props .group th { background: #a0a0a0; color: #fff; font-weight: 700; }
.props .muted { color: #808080; }
.check { display: flex; align-items: center; gap: 5px; margin-left: -1px; height: 19px; }
.check input { width: 14px; height: 14px; margin: 0; appearance: none; border: 1px solid #b5b5b5; background: #fff; }
.scroll { flex: none; width: 14px; height: 260px; margin-left: 1px; border: 1px solid #c4c4c4; background: #ececec; }
.scroll__up { display: grid; place-items: center; width: 100%; height: 14px; background: #fafafa; border-bottom: 1px solid #c4c4c4; }
.scroll__up::before { content: ""; border: 4px solid transparent; border-bottom-color: #555; border-top: 0; }
.scroll__thumb { height: 113px; border-bottom: 1px solid #b0b0b0; background: linear-gradient(90deg, #fff, #f0f0f0); }

.gutter { background: repeating-linear-gradient(#c4c4c4 0 1px, transparent 1px 3px) center 431px / 1px 16px no-repeat; }
.view { overflow: hidden; border-top: 1px solid #efefef; background: linear-gradient(#333366, #9191a6); }
.view svg { display: block; width: 100%; height: 100%; }
.axis { font: 700 9px "Liberation Sans", sans-serif; fill: #000; }

.work { padding-top: 1px; }
.view { border-top: 0; }

.examples { display: flex; flex-direction: column; min-width: 0; min-height: 0; }
.examples__head { display: flex; align-items: center; height: 26px; flex: none; padding-bottom: 8px; }
.examples__head h2 { flex: 1; }
.minibtn { width: 10px; height: 10px; margin-left: 8px; line-height: 0; }
.minibtn:last-child { margin-right: -1px; }
.minibtn svg { width: 10px; height: 10px; fill: none; stroke: #888; }
.list { flex: 1; margin: 0 3px 0 5px; padding: 0; border: 1px solid #b0b0b0; border-bottom: 0; background: #fff; list-style: none; overflow: hidden; }
.list li { display: flex; align-items: center; height: 15px; line-height: 15px; white-space: nowrap; }
.list .exp { margin-right: 3px; }

.marks { position: absolute; inset: 0; z-index: 10; width: 1362px; height: 940px; pointer-events: none; }
```
